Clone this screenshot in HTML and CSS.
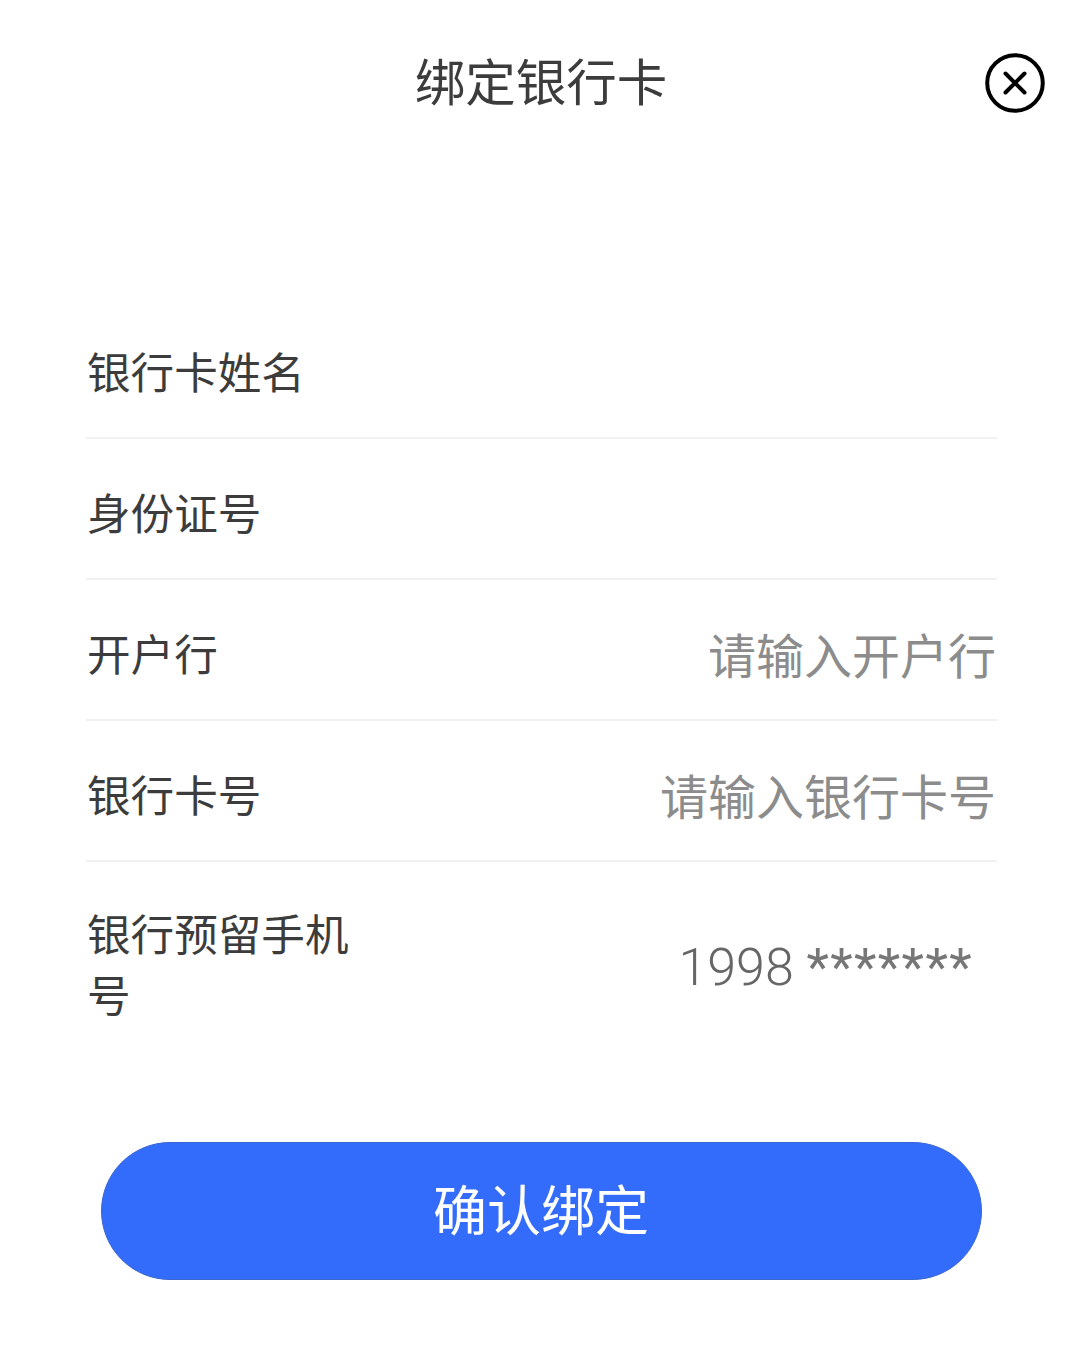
FILE: index.html
```html
<!DOCTYPE html>
<html lang="zh-CN">
<head>
    <meta charset="UTF-8">
    <meta name="viewport" content="width=device-width, initial-scale=1.0">
    <title>绑定银行卡</title>
    <link rel="stylesheet" href="styles.css">
</head>
<body>
    <div class="container">
        <div class="header">
            <h2 class="title">绑定银行卡</h2>
            <button class="close-btn">
                <svg width="60" height="60" viewBox="0 0 60 60">
                    <circle cx="30" cy="30" r="27.8" fill="none" stroke="#000" stroke-width="4"/>
                    <path d="M20.5 20.5 L39.5 39.5 M39.5 20.5 L20.5 39.5" fill="none" stroke="#000" stroke-width="4" stroke-linecap="round"/>
                </svg>
            </button>
        </div>
        <div class="form">
            <div class="row">
                <div class="label">银行卡姓名</div>
            </div>
            <div class="row">
                <div class="label">身份证号</div>
            </div>
            <div class="row">
                <div class="label">开户行</div>
                <div class="value">请输入开户行</div>
            </div>
            <div class="row">
                <div class="label">银行卡号</div>
                <div class="value">请输入银行卡号</div>
            </div>
            <div class="row row-last">
                <div class="label label-wrap">银行预留手机号</div>
                <div class="value value-phone">1998 <span class="mask">*******</span></div>
            </div>
        </div>
        <button class="button">确认绑定</button>
    </div>
</body>
</html>
```

FILE: styles.css
```css
* {
    box-sizing: border-box;
}
body {
    margin: 0;
    background-color: #fff;
    font-family: "Noto Sans CJK SC", "Liberation Sans", sans-serif;
    color: #3c3c3c;
}
.container {
    width: 1080px;
    height: 1345px;
    display: flex;
    flex-direction: column;
    align-items: center;
    overflow: hidden;
}
.header {
    width: 100%;
    height: 166px;
    display: flex;
    justify-content: center;
    align-items: flex-start;
    position: relative;
}
.title {
    margin: 44px 0 0 2px;
    font-size: 50.5px;
    line-height: 70px;
    font-weight: 400;
}
.close-btn {
    position: absolute;
    top: 53px;
    left: 984.5px;
    width: 60px;
    height: 60px;
    padding: 0;
    border: none;
    background: none;
}
.close-btn svg {
    display: block;
}
.form {
    width: 911px;
    margin-left: 3px;
    margin-top: 132px;
}
.row {
    height: 141px;
    padding: 0 1px;
    display: flex;
    justify-content: space-between;
    align-items: center;
    border-bottom: 2px solid #f1f1f1;
}
.row-last {
    height: 180px;
    border-bottom: none;
}
.label {
    padding-top: 5px;
    font-size: 43.6px;
    line-height: 61px;
}
.label-wrap {
    width: 270px;
    margin-top: 17px;
}
.value {
    padding-top: 6px;
    font-size: 48px;
    line-height: 66px;
    color: #8c8c8c;
}
.value-phone {
    margin-top: 26px;
    margin-right: 23px;
    font-family: Roboto, "Liberation Sans", sans-serif;
    font-size: 52px;
    font-weight: 300;
    color: #666;
}
.mask {
    font-weight: 400;
    letter-spacing: 1.4px;
    color: #777;
}
.button {
    width: 881px;
    height: 138px;
    margin-top: 100px;
    margin-left: 2px;
    padding-bottom: 8px;
    border: 1px solid #3a66d0;
    border-radius: 69px;
    background-color: #336cfb;
    color: #fff;
    font-family: inherit;
    font-size: 54px;
}
```
